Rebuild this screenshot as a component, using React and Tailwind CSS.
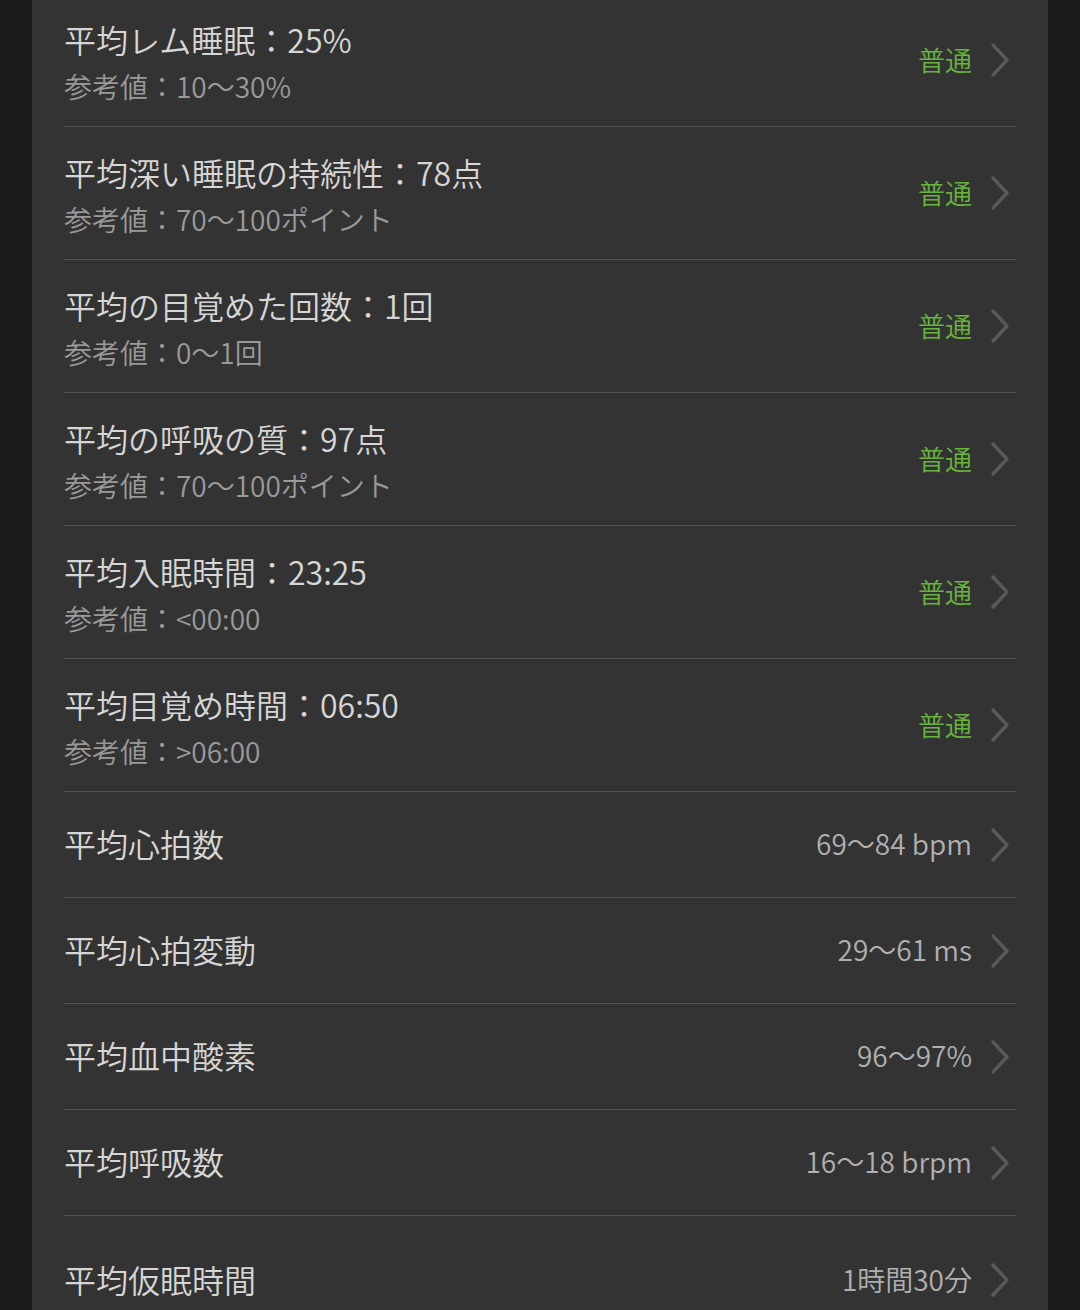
const detailRows = [
  { title: "平均レム睡眠：25%", ref: "参考値：10〜30%" },
  { title: "平均深い睡眠の持続性：78点", ref: "参考値：70〜100ポイント" },
  { title: "平均の目覚めた回数：1回", ref: "参考値：0〜1回" },
  { title: "平均の呼吸の質：97点", ref: "参考値：70〜100ポイント" },
  { title: "平均入眠時間：23:25", ref: "参考値：<00:00" },
  { title: "平均目覚め時間：06:50", ref: "参考値：>06:00" },
];

const valueRows = [
  { title: "平均心拍数", value: "69〜84 bpm" },
  { title: "平均心拍変動", value: "29〜61 ms" },
  { title: "平均血中酸素", value: "96〜97%" },
  { title: "平均呼吸数", value: "16〜18 brpm" },
  { title: "平均仮眠時間", value: "1時間30分" },
];

function Chevron() {
  return (
    <svg width="22" height="38" viewBox="0 0 22 38" className="shrink-0">
      <polyline
        points="4,4 18,19 4,34"
        fill="none"
        stroke="#595959"
        strokeWidth="3.5"
        strokeLinecap="round"
        strokeLinejoin="round"
      />
    </svg>
  );
}

function DetailRow({ row }) {
  return (
    <div className="flex h-[133px] items-center justify-between border-b border-[#525252]">
      <div className="flex flex-col self-start pt-[25px]">
        <span className="text-[32px] leading-[40px] text-[#d6d6d6]">{row.title}</span>
        <span className="mt-[8px] text-[28px] leading-[38px] text-[#9a9a9a]">{row.ref}</span>
      </div>
      <div className="flex items-center gap-[17px] pr-[5px]">
        <span className="text-[27px] leading-[38px] text-[#66b43c]">普通</span>
        <Chevron />
      </div>
    </div>
  );
}

function ValueRow({ row, last }) {
  return (
    <div
      className={`flex items-center justify-between pb-[3px] ${
        last ? "h-[128px]" : "h-[106px] border-b border-[#525252]"
      }`}
    >
      <span className="text-[32px] leading-[40px] text-[#d6d6d6]">{row.title}</span>
      <div className="flex items-center gap-[17px] pr-[5px]">
        <span className="text-[28px] leading-[38px] text-[#b0b0b0]">{row.value}</span>
        <div className="pt-[3px]">
          <Chevron />
        </div>
      </div>
    </div>
  );
}

export default function App() {
  return (
    <div
      className="h-[1310px] w-[1080px] overflow-hidden bg-[#1c1c1c] px-[32px] font-[350]"
      style={{ fontFamily: '"Noto Sans CJK JP", "Noto Sans", sans-serif' }}
    >
      <div className="-mt-[6px] bg-[#333333] px-[32px]">
        {detailRows.map((row) => (
          <DetailRow key={row.title} row={row} />
        ))}
        {valueRows.map((row, i) => (
          <ValueRow key={row.title} row={row} last={i === valueRows.length - 1} />
        ))}
      </div>
    </div>
  );
}
